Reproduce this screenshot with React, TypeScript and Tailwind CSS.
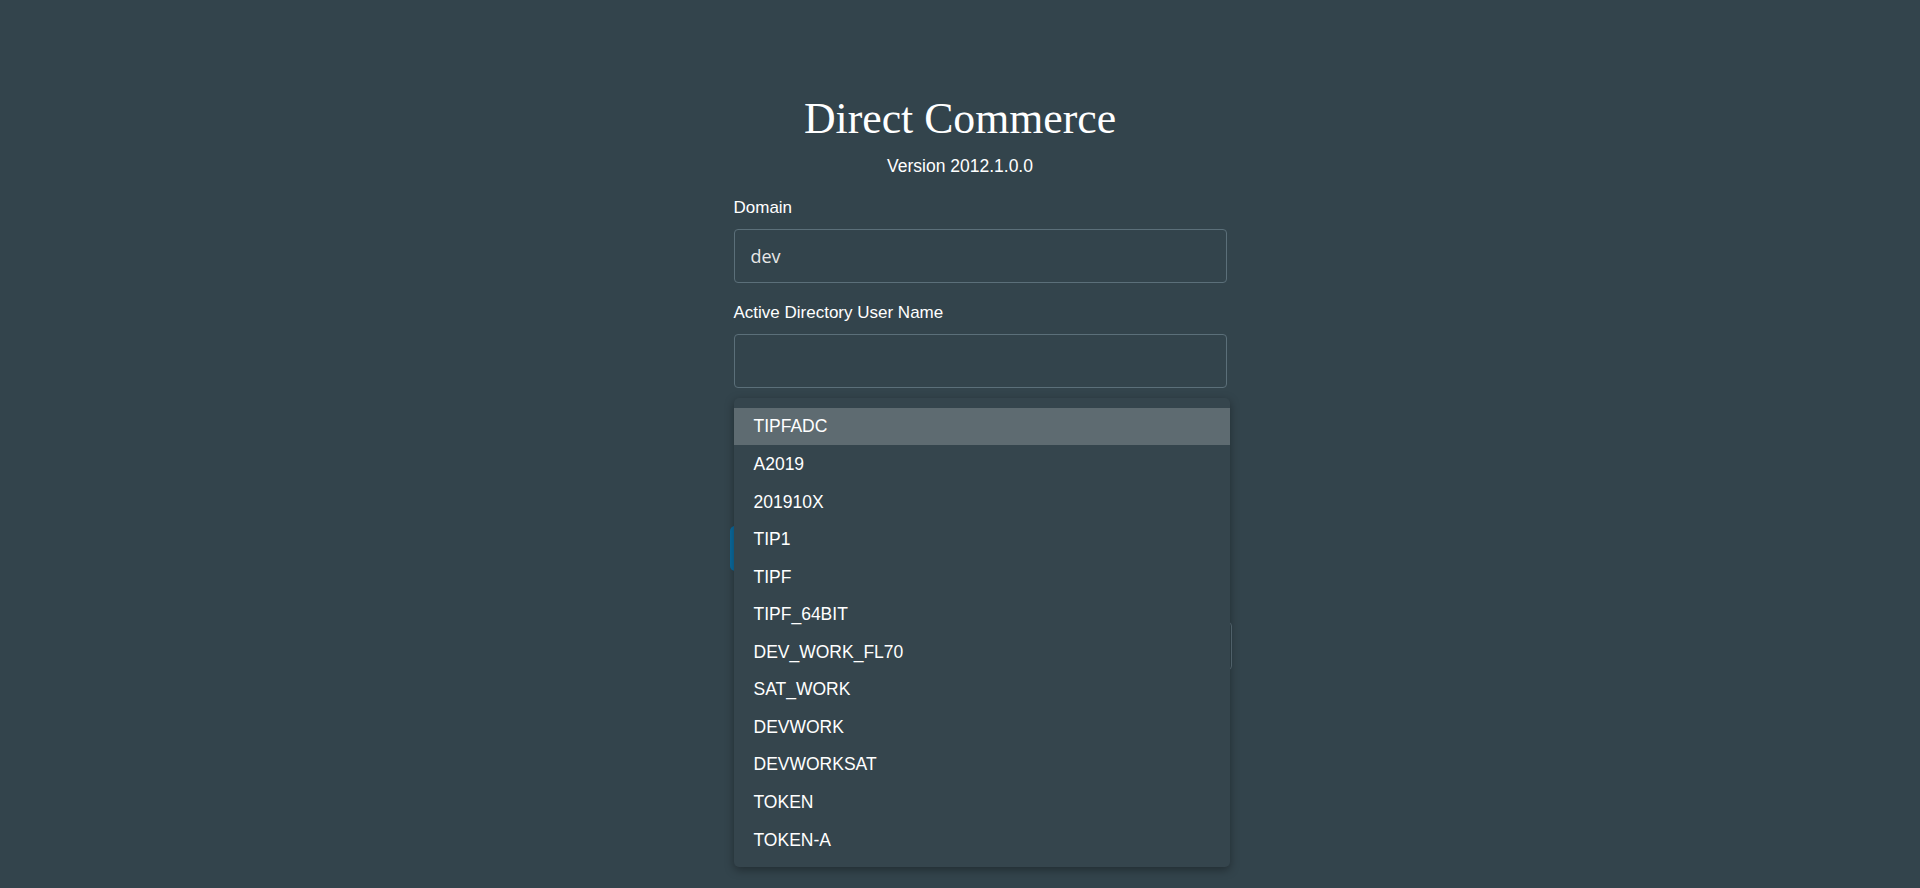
import { useState } from "react";

const ENVIRONMENTS = [
  "TIPFADC",
  "A2019",
  "201910X",
  "TIP1",
  "TIPF",
  "TIPF_64BIT",
  "DEV_WORK_FL70",
  "SAT_WORK",
  "DEVWORK",
  "DEVWORKSAT",
  "TOKEN",
  "TOKEN-A",
];

export default function App() {
  const [domain, setDomain] = useState("dev");
  const [userName, setUserName] = useState("");
  const [active, setActive] = useState(0);

  return (
    <div className="min-h-screen w-full bg-[#33444c] font-['Liberation_Sans',Arial,sans-serif] text-white">
      <div className="mx-auto flex w-[533px] flex-col">
        <h1 className="pt-[97px] text-center font-['Liberation_Serif','Times_New_Roman',serif] text-[43.75px] leading-none font-normal">
          Direct Commerce
        </h1>
        <p className="mt-[15px] text-center text-[17.5px] leading-5">Version 2012.1.0.0</p>

        <div className="flex flex-col pl-10">
          <label className="mt-[22px] text-[17px] leading-5">Domain</label>
          <input
            value={domain}
            onChange={(e) => setDomain(e.target.value)}
            className="mt-[11px] h-[54px] w-full rounded-[4px] border border-[#5b6f79] bg-transparent px-4 font-['Open_Sans',sans-serif] text-[18px] text-[#e8e8e8] outline-none"
          />

          <label className="mt-5 text-[17px] leading-5">Active Directory User Name</label>
          <div className="relative mt-[11px]">
            <input
              value={userName}
              onChange={(e) => setUserName(e.target.value)}
              className="h-[54px] w-full rounded-[4px] border border-[#5b6f79] bg-transparent px-4 font-['Open_Sans',sans-serif] text-[18px] text-[#e8e8e8] outline-none"
            />

            {/* Autocomplete menu */}
            <ul className="absolute top-full left-0 z-10 mt-[10px] w-[496px] rounded-[5px] bg-[#35454d] pt-[10px] pb-2 shadow-[0_3px_10px_rgba(0,0,0,0.35)]">
              {ENVIRONMENTS.map((env, i) => (
                <li
                  key={env}
                  onMouseEnter={() => setActive(i)}
                  className={
                    "flex h-[37.57px] items-center pl-5 text-[17.5px] text-white " +
                    (active === i ? "bg-[#5e6b71]" : "")
                  }
                >
                  {env}
                </li>
              ))}
            </ul>
          </div>

          {/* Fields below, covered by the menu */}
          <div className="mt-4 h-5" />
          <input
            type="password"
            className="mt-[11px] h-[54px] w-full rounded-[4px] border border-[#5b6f79] bg-transparent px-4 outline-none"
          />
          <button className="mt-[37px] -ml-1 h-[45px] w-[140px] rounded-[5px] bg-[#0b6a9e]" />
          <div className="mt-[51px] -mr-[5px] h-[48px] rounded-[4px] border border-[#5b6f79]" />
        </div>
      </div>
    </div>
  );
}
